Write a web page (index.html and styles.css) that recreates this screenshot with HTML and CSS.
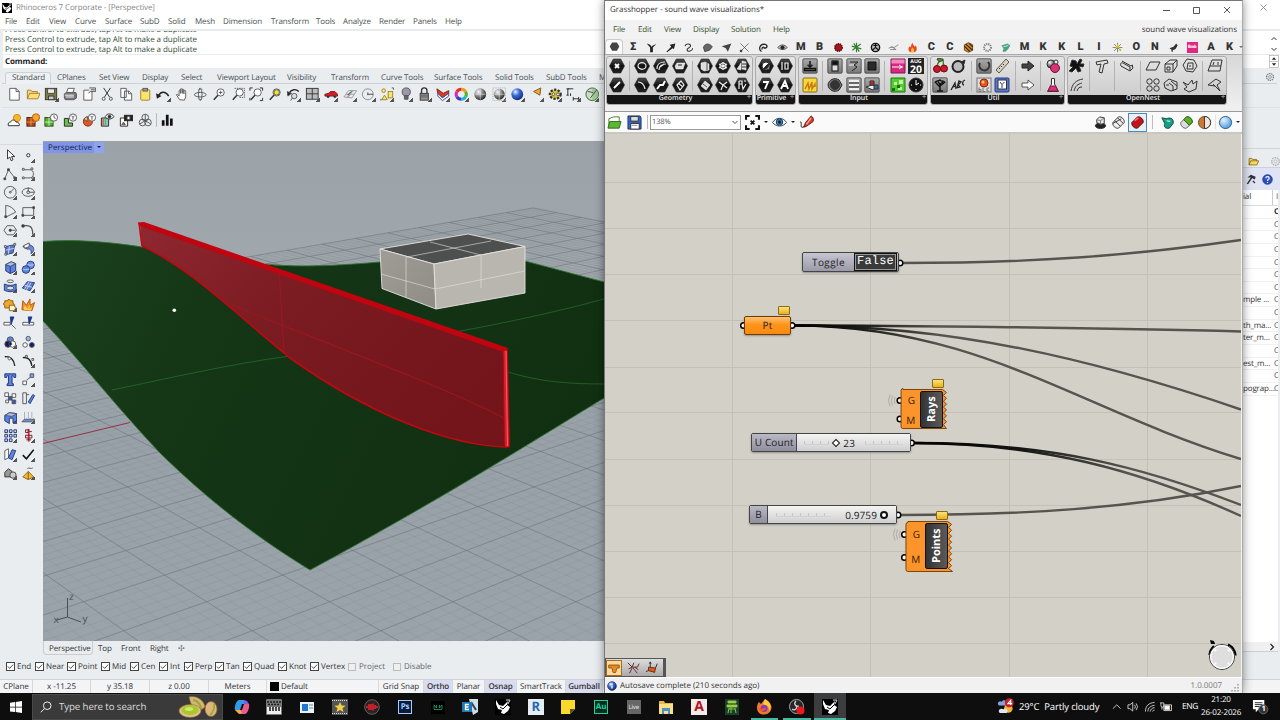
FILE: index.html
```html
<!DOCTYPE html>
<html lang="en">
<head>
    <meta charset="UTF-8">
    <meta name="viewport" content="width=device-width, initial-scale=1.0">
    <title>Rhinoceros 7 Corporate - [Perspective]</title>
    <link rel="stylesheet" href="styles.css">
</head>
<body>
    <!-- shared shapes -->
    <svg class="defs">
        <defs>
            <radialGradient id="gBall" cx=".35" cy=".3" r=".8"><stop offset="0" stop-color="#fff"/><stop offset=".45" stop-color="#888"/><stop offset="1" stop-color="#111"/></radialGradient>
            <radialGradient id="gBlue" cx=".35" cy=".3" r=".8"><stop offset="0" stop-color="#e8f4ff"/><stop offset=".4" stop-color="#3c6fd8"/><stop offset="1" stop-color="#0a1f6e"/></radialGradient>
            <radialGradient id="gSky" cx=".35" cy=".3" r=".8"><stop offset="0" stop-color="#e4f4ff"/><stop offset="1" stop-color="#4390d8"/></radialGradient>
            <linearGradient id="gHex" x1="0" y1="0" x2="0" y2="1"><stop offset="0" stop-color="#4a4a4a"/><stop offset=".5" stop-color="#111"/><stop offset="1" stop-color="#222"/></linearGradient>
            <linearGradient id="gBtn" x1="0" y1="0" x2="0" y2="1"><stop offset="0" stop-color="#aaa"/><stop offset="1" stop-color="#777"/></linearGradient>
            <linearGradient id="gLand" x1="0" y1="0" x2="1" y2=".3"><stop offset="0" stop-color="#1c421e"/><stop offset=".3" stop-color="#153716"/><stop offset="1" stop-color="#113012"/></linearGradient>
            <linearGradient id="gWall" x1="0" y1="0" x2="1" y2=".6"><stop offset="0" stop-color="#902830"/><stop offset=".45" stop-color="#7b1b22"/><stop offset="1" stop-color="#73151b"/></linearGradient>
            <linearGradient id="gSide" x1="0" y1="0" x2="1" y2="1"><stop offset="0" stop-color="#a09d97"/><stop offset="1" stop-color="#8f8c86"/></linearGradient>
            <linearGradient id="gPt" gradientUnits="userSpaceOnUse" x1="794" y1="0" x2="940" y2="0"><stop offset="0" stop-color="#000"/><stop offset=".4" stop-color="#161513"/><stop offset="1" stop-color="#57544e"/></linearGradient>
            <linearGradient id="gCount" gradientUnits="userSpaceOnUse" x1="914" y1="0" x2="1130" y2="0"><stop offset="0" stop-color="#000"/><stop offset=".5" stop-color="#161513"/><stop offset="1" stop-color="#57544e"/></linearGradient>
            <symbol id="hex" viewBox="0 0 16 16"><path d="M4.3 1h7.4L15.5 8l-3.8 7H4.3L.5 8z" fill="url(#gHex)" stroke="#222" stroke-width=".6"/></symbol>
            <symbol id="sq" viewBox="0 0 16 16"><rect x=".8" y=".8" width="14.4" height="14.4" rx="1" fill="url(#gBtn)" stroke="#444" stroke-width=".8"/></symbol>
            <symbol id="lens" viewBox="0 0 16 16"><circle cx="9.5" cy="6" r="4" fill="#fff" stroke="#555"/><path d="M6.5 9L2 14" stroke="#333" stroke-width="1.6" fill="none"/></symbol>
            <symbol id="rhino" viewBox="0 0 16 16"><rect width="16" height="16" fill="#000"/><path d="M1 1l3 5 4 1 5-5-1 4 3 2-2 4-4 3-3-1 1-3-4-1-2-5z" fill="#fff"/><path d="M5 8l3 2 4-4" stroke="#000" stroke-width="1" fill="none"/><path d="M11 1h4l-2 4" stroke="#ddd" stroke-width="1" fill="none"/></symbol>
            <symbol id="tick" viewBox="0 0 8 8"><path d="M1 4l2 2.200L7 1.800" fill="none" stroke="#222" stroke-width=".9"/></symbol>
            <symbol id="gear" viewBox="0 0 16 16"><circle cx="8" cy="8" r="5.5" fill="none" stroke="#777" stroke-width="2" stroke-dasharray="2.2 1.2"/><circle cx="8" cy="8" r="2.3" fill="none" stroke="#777"/></symbol>
        </defs>
    </svg>

    <div class="desktop">
        <div class="rhino">
            <div class="title-bar">
                <svg viewBox="0 0 16 16"><use href="#rhino"/></svg>
                <span>Rhinoceros 7 Corporate - [Perspective]</span>
                <svg class="close" viewBox="0 0 8 8"><path d="M.5.5l7 7m0-7l-7 7"/></svg>
            </div>
            <div class="menu">
                <span>File</span><span>Edit</span><span>View</span><span>Curve</span><span>Surface</span><span>SubD</span><span>Solid</span><span>Mesh</span><span>Dimension</span><span>Transform</span><span>Tools</span><span>Analyze</span><span>Render</span><span>Panels</span><span>Help</span>
            </div>
            <div class="history">
                <div class="lines">
                    <p>Press Control to extrude, tap Alt to make a duplicate</p>
                    <p>Press Control to extrude, tap Alt to make a duplicate</p>
                    <p>Press Control to extrude, tap Alt to make a duplicate</p>
                </div>
                <svg class="scroll" viewBox="0 0 10 24"><path d="M2.500 9L5 6.500 7.500 9M2.500 17L5 19.500 7.500 17"/></svg>
            </div>
            <div class="command"><b>Command:</b><svg class="scroll" viewBox="0 0 10 12"><rect x="1" y=".5" width="8" height="11"/><path d="M1 6h8"/><path d="M5 2l2 2.400H3zM5 10L3 7.600h4z" class="solid"/></svg></div>

            <div class="tabs">
                <span class="on">Standard</span><span>CPlanes</span><span>Set View</span><span>Display</span><span>Select</span><span>Viewport Layout</span><span>Visibility</span><span>Transform</span><span>Curve Tools</span><span>Surface Tools</span><span>Solid Tools</span><span>SubD Tools</span><span>Mesh</span>
                <svg class="tab-gear" viewBox="0 0 16 16"><use href="#gear"/></svg>
            </div>

            <div class="toolbar row1">
                <svg viewBox="0 0 16 16"><path d="M3 1.500h7l3.500 3.500v9.500H3z" fill="#fff"/><path d="M10 1.500V5h3.500"/></svg>
                <svg viewBox="0 0 16 16"><path d="M1.500 13V3.500h4l1 1.500h6v2" fill="#f8d878" stroke="#a87a20"/><path d="M1.500 13L4 7h11.500L13 13z" fill="#fce07a" stroke="#a87a20"/></svg>
                <svg class="fly" viewBox="0 0 16 16"><rect x="1.500" y="1.500" width="12.500" height="12.500" fill="#7d8040" stroke="#333"/><rect x="4" y="2" width="7.500" height="5" fill="#eee" stroke="#444"/><rect x="5" y="10" width="6" height="4" fill="#ccc" stroke="#333"/></svg>
                <svg viewBox="0 0 16 16"><path d="M4 6l1.500-4.500h7L11 6" fill="#fff"/><path d="M1.500 7.500L4 6h10l1 2v4l-3 2H2.500l-1-2z" fill="#777"/><path d="M2 9h10m0 2H3" stroke="#fff"/></svg>
                <svg viewBox="0 0 16 16"><path d="M2 3.500h9v11H2z" fill="#fff"/><path d="M8 1h7v4H9L7 7" fill="#ddd"/><path d="M10 3h4"/></svg>
                <svg viewBox="0 0 16 16"><path d="M4 1l6.500 10M11.500 1L5 11" stroke="#222"/><circle cx="4" cy="13" r="1.700"/><circle cx="12" cy="13" r="1.700"/></svg>
                <svg viewBox="0 0 16 16"><path d="M2 1.500h6v10H2zM6 4.500h5l3 3v7H6z" fill="#fff"/><path d="M10.500 4.500v3H14"/></svg>
                <svg viewBox="0 0 16 16"><rect x="3" y="3" width="10" height="11.500" rx="1" fill="#fbe46d" stroke="#a07c28"/><rect x="5.500" y="1.500" width="5" height="3" fill="#999" stroke="#555"/></svg>
                <svg class="fly" viewBox="0 0 16 16"><path d="M3 9c3-5 8-4 11 1" stroke="#222" stroke-width="1.600"/><path d="M0 7l1 6 5-3z" fill="#222" stroke="none"/></svg>
                <svg viewBox="0 0 16 16"><path d="M5 14L1.500 8.500c1-1 2 0 3 1.500V4c1-1 1.500 0 1.700 3V2c1-1 1.800 0 1.800 5V2.500c1-1 1.800 0 1.800 5V4c1.500-1 2 0 2 2v5l-1.500 3.500z" fill="#fff"/></svg>
                <svg viewBox="0 0 16 16"><ellipse cx="8" cy="8.500" rx="6.500" ry="2.500"/><ellipse cx="8" cy="8" rx="2" ry="6"/><path d="M6 3l2-2 2 2M6 13l2 2 2-2"/></svg>
                <svg viewBox="0 0 16 16"><use href="#lens"/><path d="M7.500 6h4M9.500 4v4"/></svg>
                <svg viewBox="0 0 16 16"><use href="#lens"/><path d="M4 1.500h11v10H9" stroke-dasharray="1.500 1"/></svg>
                <svg viewBox="0 0 16 16"><use href="#lens"/><path d="M1 4V1h3m8 0h3v3m0 8v3h-3M1 12v3" stroke="#222"/></svg>
                <svg viewBox="0 0 16 16"><use href="#lens"/><circle cx="9.500" cy="6" r="3" fill="#f5e428"/></svg>
                <svg class="fly" viewBox="0 0 16 16"><path d="M2 7c3-5 8-5 11-2" stroke="#222" stroke-width="1.500"/><path d="M0 5l1 5 4-3z" fill="#222"/><circle cx="8" cy="10" r="3" fill="#ddd"/><path d="M6 12l-2 3"/></svg>
                <svg class="fly" viewBox="0 0 16 16"><rect x="1.500" y="1.500" width="13" height="12" fill="#b9bcbe" stroke="#333"/><path d="M8 1.500v12M1.500 7.500h13" stroke="#333"/></svg>
                <svg class="fly" viewBox="0 0 16 16"><path d="M1 10V8l4-1 2-2h5l3 3v2z" fill="#d81c24" stroke="#8e1218"/><circle cx="4.500" cy="10.500" r="1.300" fill="#222"/><circle cx="12" cy="10.500" r="1.300" fill="#222"/></svg>
                <svg class="fly" viewBox="0 0 16 16"><path d="M1 11l5-7h9l-5 8zM3.500 8h9M6 11l5-7M4 12l6-8" stroke="#999"/><path d="M5 9l4-4" stroke="#333"/></svg>
                <svg class="fly" viewBox="0 0 16 16"><circle cx="7.500" cy="8" r="6" stroke="#888"/><path d="M7.500 8h6M7.500 6v3" stroke="#444"/></svg>
                <svg class="fly" viewBox="0 0 16 16"><rect x="9" y="5" width="5" height="7" fill="#fbe46d" stroke="#9c8420"/><path d="M5 9l3 5H2z" fill="#fbe46d" stroke="#9c8420"/><circle cx="4" cy="4" r="2" fill="#fbe46d" stroke="#9c8420"/><path d="M13 1h2v2M1 13v2"/></svg>
                <svg class="fly" viewBox="0 0 16 16"><circle cx="8" cy="5.500" r="4.500" fill="#99a" stroke="#555"/><path d="M6 9.500h4v4H6z" fill="#666"/></svg>
                <svg class="fly" viewBox="0 0 16 16"><path d="M5 7V4c0-4 6-4 6 0v3" stroke="#333" stroke-width="1.500"/><rect x="3.500" y="7" width="9" height="7.500" fill="#999" stroke="#333"/><path d="M4 9h8m-8 2h8" stroke="#555"/></svg>
                <svg class="fly" viewBox="0 0 16 16"><path d="M1 2l7 5 6-3v3l-7 5-5-5z" fill="#e33a24" stroke="#7a1a12"/><path d="M2 7l5 5 7-5v3l-7 5-5-5z" fill="#fff" stroke="#2844a0"/></svg>
                <svg class="fly" viewBox="0 0 16 16" stroke-width="3.400"><path d="M8 2.500a5.500 5.500 0 014.800 2.700" stroke="#f29b1c"/><path d="M12.800 5.200a5.500 5.500 0 010 5.600" stroke="#52b531"/><path d="M12.800 10.800A5.500 5.500 0 018 13.500" stroke="#25b6cf"/><path d="M8 13.500a5.500 5.500 0 01-4.800-2.700" stroke="#333bd0"/><path d="M3.200 10.800a5.500 5.500 0 010-5.600" stroke="#d528c0"/><path d="M3.200 5.200A5.500 5.500 0 018 2.500" stroke="#e3302a"/></svg>
                <svg viewBox="0 0 16 16"><circle cx="8" cy="8" r="6.500" fill="url(#gBall)" stroke="none"/><path d="M8 2v12M2 8h12" stroke="#eee" stroke-width=".6"/></svg>
                <svg class="fly" viewBox="0 0 16 16"><rect x="1" y="1" width="14" height="14" stroke-dasharray="1 1" stroke="#aaa"/><circle cx="8" cy="8" r="6" fill="url(#gBall)" stroke="none"/><path d="M8 2v12M2 8h12" stroke="#eee" stroke-width=".6"/></svg>
                <svg class="fly" viewBox="0 0 16 16"><circle cx="8" cy="8" r="6.500" fill="url(#gBlue)" stroke="none"/></svg>
                <svg class="fly" viewBox="0 0 16 16"><path d="M5 5l8-4-1 8z" fill="#f4a83a" stroke="#7a5216"/><path d="M1 4h3M1 7h3" stroke="#ddd"/></svg>
                <svg class="fly" viewBox="0 0 16 16"><ellipse cx="8" cy="8" rx="6" ry="5" fill="#d9c23c" stroke="#333" stroke-dasharray="2.500 1.500" stroke-width="2.500"/><circle cx="6" cy="8" r="1.500" fill="#fff"/><circle cx="11" cy="8" r="1.500" fill="#fff"/></svg>
                <svg class="fly" viewBox="0 0 16 16"><path d="M2 9V2h6M.500 2H3M8 13h6M8 11v4M14 11v4M5 7v3M.500 9H3" stroke="#222"/></svg>
                <svg class="fly" viewBox="0 0 16 16"><circle cx="8" cy="8" r="7" fill="#9bc98f" stroke="#4d6048"/><path d="M8 2a6 6 0 000 12z" fill="#c9dfc4" stroke="none"/><path d="M13 3L6 12M3 5l6 1" stroke="#444"/></svg>
            </div>

            <div class="toolbar row2">
                <svg viewBox="0 0 16 16"><circle cx="11" cy="5.500" r="4" fill="#f5b62c" stroke="#d48a10"/><path d="M1.500 14c-1-3 1-4 2.500-4 1-3 5-3 6 0 3 0 4 2 3.500 4z" fill="#fff" stroke="#222"/></svg>
                <svg viewBox="0 0 16 16"><rect x="1" y="5" width="9" height="9.500" fill="#b5421f" stroke="#4a1a0c"/><path d="M5.500 5v9M1 10h9" stroke="#e2a13b"/><circle cx="11" cy="5" r="4" fill="#f5a62c" stroke="#b55c10" stroke-dasharray="1.500 .7" stroke-width="1.500"/></svg>
                <svg viewBox="0 0 16 16"><rect x="1" y="5" width="9" height="9.500" fill="#51b52a" stroke="#234a14"/><path d="M5.500 5v9M1 10h9" stroke="#d7eecb"/><circle cx="11" cy="5" r="4" fill="#fff"/><path d="M11 2.500V5l2 1"/></svg>
                <svg viewBox="0 0 16 16"><path d="M1.500 6v8.500h9V11H6V6z" fill="#6ec14d" stroke="#222"/><circle cx="11" cy="5" r="4" fill="#fff"/><path d="M9.500 3L11 5l1.500-2M11 5v2.500"/></svg>
                <svg viewBox="0 0 16 16"><circle cx="6.500" cy="9.500" r="5" fill="#e8542a" stroke="#7a2a10"/><path d="M6.500 9.500L2 7a5 5 0 014-3z" fill="#f8c23c"/><circle cx="11" cy="5" r="4" fill="#fff"/><path d="M9.500 3L11 5l1.500-2M11 5v2.500"/></svg>
                <svg viewBox="0 0 16 16"><path d="M1.500 5.500h8v9h-8z" fill="#8ac6d8" stroke="#222"/><path d="M3.500 6v8" stroke="#e25a3c" stroke-width="1.500"/><path d="M6 6v8" stroke="#67b54a" stroke-width="1.500"/><path d="M5.500 4c3-4 7-4 10 0-3 3.500-7 3.500-10 0z" fill="#fff" stroke="#222"/><circle cx="10.500" cy="4" r="1.700" fill="#222"/></svg>
                <svg viewBox="0 0 16 16"><path d="M1.500 5.500h8v9h-8z" fill="#fff" stroke="#222"/><path d="M3 13l2-3 2 3z" fill="#e8542a"/><rect x="6" y="2.500" width="9" height="6" fill="#222" stroke="#222"/><circle cx="10.500" cy="5.500" r="1.800" fill="#fff"/></svg>
                <svg viewBox="0 0 16 16"><circle cx="8" cy="5" r="3.700"/><circle cx="5" cy="10.500" r="3.700"/><circle cx="11" cy="10.500" r="3.700"/><path d="M8 1.500v7l-6 3.500M8 8.500l6 3.500"/></svg>
                <i class="split"></i>
                <svg viewBox="0 0 16 16"><path d="M2 8h3v6H2zM6.500 2h3v12h-3zM11 6h3v8h-3z" fill="#111" stroke="none"/></svg>
            </div>

            <div class="main">
                <div class="side">
                    <svg viewBox="0 0 16 16"><path d="M5 2v10l2.500-2L9 14l2-1-1.500-3.500H13z" fill="#fff" stroke="#222"/></svg>
                    <svg class="fly" viewBox="0 0 16 16"><circle cx="8" cy="8" r="1.800" fill="#fff" stroke="#222"/></svg>
                    <svg class="fly" viewBox="0 0 16 16"><path d="M2 13L6 3l7 9"/><path d="M1 12h2v2H1zM12 11h2v2h-2zM5 2h2v2H5z" fill="#222"/></svg>
                    <svg class="fly" viewBox="0 0 16 16"><path d="M3 3h7c5 0 5 9 0 9H3"/><path d="M1.500 1.500h2v2h-2zM11 1h2v2h-2zM1.500 11h2v2h-2zM12 11h2v2h-2z" fill="#fff"/></svg>
                    <svg class="fly" viewBox="0 0 16 16"><circle cx="8" cy="8" r="6.500"/><path d="M8 8l4.500-4.500"/><circle cx="8" cy="8" r="1"/></svg>
                    <svg class="fly" viewBox="0 0 16 16"><ellipse cx="8" cy="8" rx="6.800" ry="4.500"/><circle cx="8" cy="8" r="1.600"/><path d="M8 8V2.500M9.500 8h5"/></svg>
                    <svg class="fly" viewBox="0 0 16 16"><path d="M3 1.500v13L14 9C12 5 8 2 3 1.500z"/><path d="M2 13h2v2H2z" fill="#222"/></svg>
                    <svg class="fly" viewBox="0 0 16 16"><path d="M2 4h12v8.500H2z"/><path d="M1 11.500h2v2H1zM13 3h2v2h-2z" fill="#222"/></svg>
                    <svg class="fly" viewBox="0 0 16 16"><path d="M4.500 3h7L15 8l-3.500 5h-7L1 8z"/><circle cx="8" cy="8" r="1.300" fill="#222"/><path d="M8 8h6"/></svg>
                    <svg class="fly" viewBox="0 0 16 16"><path d="M2 3h4c6 0 7 4 7 10" stroke-width="1.400"/><path d="M1 2h2.500v2.500H1z" fill="#222"/></svg>
                    <svg class="fly" viewBox="0 0 16 16"><path d="M3 5l10-2-2 9-8 2z" fill="#5b77c8" stroke="#223a80"/><path d="M7 4.500L6 13M3 9l9-2" stroke="#cdd8f8"/><path d="M1.500 4h2v2h-2zM12 1.500h2v2h-2zM2 12.500h2v2H2z" fill="#fff"/></svg>
                    <svg class="fly" viewBox="0 0 16 16"><path d="M2 5l6-3 5 3c2 3 1 6-2 8 1-4-1-6-4-5z" fill="#6e8de0" stroke="#2b3f80"/><path d="M3 4l6-3v4L4 7z" fill="#fff"/></svg>
                    <svg class="fly" viewBox="0 0 16 16"><path d="M3 5l6-3 5 2v8l-6 3-5-3z" fill="#5e83dc" stroke="#20367c"/><path d="M3 5l5 2 6-3M8 7v8" stroke="#20367c"/><path d="M3 5l6-3 5 2-6 3z" fill="#a9c0f6"/></svg>
                    <svg class="fly" viewBox="0 0 16 16"><circle cx="10.500" cy="5.500" r="4.200" fill="#6f90e2" stroke="#20367c"/><circle cx="5.500" cy="10.500" r="4.200" fill="#5e83dc" stroke="#20367c"/><path d="M2 10c2 1 5 1 7 0M7 5c2 1 5 1 7 0" stroke="#c7d6ff"/></svg>
                    <svg class="fly" viewBox="0 0 16 16"><ellipse cx="8" cy="2.500" rx="3.500" ry="1.500"/><path d="M1.500 5.500c4 2 9 2 13 0v7c-4 2-9 2-13 0z" fill="#5e83dc" stroke="#20367c"/><ellipse cx="8" cy="10" rx="4" ry="2" fill="#d8e2fc"/></svg>
                    <svg class="fly" viewBox="0 0 16 16"><path d="M1.500 10L7 3l8 1-5 9z" fill="#5b77c8" stroke="#223a80"/><path d="M4 7l8 2M6 12l5-8M9 3l-5 8" stroke="#cdd8f8"/></svg>
                    <svg class="fly" viewBox="0 0 16 16"><path d="M2 3h3c0-2 3-2 3 0h3v3c2 0 2 3 0 3v2H2V8C0 8 0 5 2 5z" fill="#f0a82c" stroke="#8a5c10"/><path d="M7 8h6v2c2 0 2 2 0 2v2H7z" fill="#fff3cd" stroke="#8a5c10"/></svg>
                    <svg viewBox="0 0 16 16"><path d="M1 13L2 3l4 5 4-7v7l5-3-3 9z" fill="#ef9426" stroke="#b5520c"/><path d="M3 13l1-5 3 4 3-5-1 5 3-2-1 4z" fill="#fbd05a" stroke="none"/></svg>
                    <svg viewBox="0 0 16 16"><path d="M1 7h7v3H1zM9 9l5 5" fill="#fff"/><path d="M8 1h4L9 9z" fill="#1f3690" stroke="#1f3690"/></svg>
                    <svg viewBox="0 0 16 16"><path d="M2 7h12v3H2z" fill="#fff"/><path d="M8 1h4L9 9z" fill="#1f3690" stroke="#1f3690"/></svg>
                    <svg class="fly" viewBox="0 0 16 16"><circle cx="8" cy="5.500" r="3.500" fill="#5e83dc"/><circle cx="5.500" cy="10" r="3.500" fill="#111b52"/><circle cx="10.500" cy="10" r="3.500" fill="#fff"/><path d="M8 7l2 3-2 2-2-2z" fill="#111b52"/></svg>
                    <svg viewBox="0 0 16 16"><circle cx="8" cy="4" r="2.500" fill="#9fb4ee"/><circle cx="4.500" cy="11" r="2.500" fill="#fff"/><circle cx="12" cy="11" r="2.700" fill="#111b82"/></svg>
                    <svg viewBox="0 0 16 16"><path d="M2 3c6-1 10 3 11 10" stroke="#222" stroke-width="1.500"/><circle cx="7" cy="5" r="1.500" fill="#fff"/></svg>
                    <svg class="fly" viewBox="0 0 16 16"><path d="M2 4c6-1 9 3 10 9" stroke="#222" stroke-width="1.500"/><path d="M5 1.500h2v2H5zM12 5h2v2h-2z" fill="#fff"/></svg>
                    <svg viewBox="0 0 16 16"><path d="M2 2h12v4h-2c0-2-1-2-2-2v9h1.500v2h-7v-2H6V4C5 4 4 4 4 6H2z" fill="#5e83dc" stroke="#1b2f78"/></svg>
                    <svg class="fly" viewBox="0 0 16 16"><path d="M2 10h4v4H2z" fill="#fff"/><path d="M10 2h4v4h-4z" fill="#7f9cec"/><path d="M6 9l4-3"/></svg>
                    <svg viewBox="0 0 16 16"><path d="M2 2h4v4H2zM10 3h4v4h-4zM3 10h3v3H3z" fill="#fff"/><path d="M6 6h4v4H6zM10 10h4v4h-4z" fill="#3a59b8"/></svg>
                    <svg viewBox="0 0 16 16"><path d="M2 2h4v12H2zM6 4h3"/><path d="M8 12l5-8 2 1-5 9z" fill="#5e83dc" stroke="#20367c"/></svg>
                    <svg class="fly" viewBox="0 0 16 16"><path d="M2 6l5-3 8 1v8l-4 2V9H7v6l-5-3z" fill="#5e83dc" stroke="#20367c"/><path d="M2 6l5-3 8 1-5 3z" fill="#a9c0f6"/></svg>
                    <svg class="fly" viewBox="0 0 16 16"><path d="M1 13l3-3h11l-3 3z" fill="#6f90e2"/><path d="M4 2v8M8 2v8M12 2v8" stroke="#fff" stroke-width="2"/><path d="M4 2v8M8 2v8M12 2v8" stroke="#99a"/></svg>
                    <svg class="fly" viewBox="0 0 16 16"><path d="M2 2h3v3H2zM7 2h3v3H7zM12 2h3v3h-3zM2 7h3v3H2zM7 7h3v3H7zM12 7h3v3h-3zM2 12h3v3H2zM7 12h3v3H7z" fill="#ccd6f6" stroke="#23326c"/></svg>
                    <svg class="fly" viewBox="0 0 16 16"><path d="M8.500 1v14" stroke="#d82c3a" stroke-width="2"/><path d="M5 2h3v3H5zM5 8h7v3H5zM9 4h3M6 13h5" stroke="#6a1720"/></svg>
                    <svg class="fly" viewBox="0 0 16 16"><path d="M2 4l4-2v10l-4 2z" fill="#fff"/><path d="M6 12l4-9 4 1-4 10z" fill="#5e83dc" stroke="#20367c"/></svg>
                    <svg class="fly" viewBox="0 0 16 16"><path d="M2 9l4 4 8-10" stroke="#111" stroke-width="1.700"/></svg>
                    <svg class="fly" viewBox="0 0 16 16"><path d="M2 7l4-4 4 3v6H2z" fill="#999" stroke="#333"/><circle cx="11" cy="10" r="3.500" fill="#ccc" stroke="#444"/></svg>
                    <svg class="fly" viewBox="0 0 16 16"><path d="M8 6l6 6-6 3-6-3z" fill="#f0b83a" stroke="#8a5c10"/><path d="M8 6v9" stroke="#8a5c10"/><path d="M7 3c2-2 4 1 6-1"/></svg>
                </div>

                <div class="view">
                    <div class="view-port">
                        <svg class="scene" viewBox="43 141 561 500">
                            <path id="minor" class="minor"/>
                            <path id="major" class="major"/>
                            <path d="M43 443.500L130 422.500" stroke="#98314a"/>
                            <!-- terrain -->
                            <path class="land" d="M43 241.500C75 239 110 242 142 247L262 264C300 268 345 265 380 262L525 261L604 282V398C540 437 440 500 310 570C240 527 195 487 160 453C120 411 85 366 43 321z"/>
                            <path d="M43 241.500C75 239 110 242 142 247M266 264C300 268 345 265 380 262M525 261L604 282M604 398C540 437 440 500 310 570C240 527 195 487 160 453C120 411 85 366 43 321" class="rim"/>
                            <path d="M112 390C170 378 230 364 290 356M450 333C510 322 560 311 604 299M508 372C540 382 570 384 604 384" class="iso"/>
                            <!-- solid box -->
                            <g class="block">
                                <path d="M380 249L468 234 525 246.500 434 264z" fill="#4e504f"/>
                                <path d="M380 249L434 264 436 309 382 288.500z" fill="url(#gSide)"/>
                                <path d="M434 264L525 246.500V293L436 309z" fill="#b9b6b0"/>
                                <path d="M406 257v40M381 274l54 15 90-18M430 242l51 13M407 257l84-16M481 256v32" class="thin"/>
                            </g>
                            <!-- wall -->
                            <path d="M140 223L506 351 508 446C450 446 370 415 290 358C235 313 190 268 142 246z" fill="url(#gWall)"/>
                            <path d="M279 272L284 352M232 305C330 345 440 385 504 418" stroke="#a01620" fill="none"/>
                            <path d="M142 246C190 268 235 313 290 358C370 415 450 446 508 447" class="edge"/>
                            <path d="M137.500 222.500L144 222 508 348 507 352.500 500 351 140 226z" fill="#c00510"/>
                            <path d="M139 223L142 246" class="edge"/>
                            <path d="M503 350h4.500l2 97h-5z" fill="#d2202c" stroke="#b00610"/>
                            <path d="M506 351l1.500 95" stroke="#ff5a62"/>
                            <circle cx="174.300" cy="310.300" r="1.800" fill="#fff"/>
                            <path d="M67.500 617V598M67.500 617L57 620M67.500 617L81 622" stroke="#4a5054" fill="none"/>
                            <text x="69" y="600">z</text><text x="53.500" y="623">x</text><text x="82.500" y="622">y</text>
                        </svg>
                        <div class="view-label">Perspective<i></i></div>
                    </div>
                    <div class="view-tabs"><span class="on">Perspective</span><span>Top</span><span>Front</span><span>Right</span><span class="plus">✣</span></div>
                </div>

                <div class="panel">
                    <div class="panel-tabs">
                        <svg viewBox="0 0 16 16"><path d="M1.500 13V3.500h4l1 1.500h6v2M1.500 13L4 7h11.500L13 13z" fill="#fbd95a" stroke="#6c5212"/></svg>
                        <svg viewBox="0 0 16 16" class="pale"><use href="#gear"/></svg>
                    </div>
                    <div class="panel-tools">
                        <svg viewBox="0 0 16 16"><path d="M2 5l5-4 7 3-1 4-4-2-6 9-2-1 6-9z" fill="#333" stroke="none"/><path d="M10 10l3 3" stroke="#333" stroke-width="2"/></svg>
                        <svg viewBox="0 0 16 16"><circle cx="8" cy="8" r="7" fill="#2b50c4" stroke="#1a3280"/><path d="M5.500 6c0-3 5-3 5 0 0 1.800-2.500 1.500-2.500 4M8 11.500v1.500" stroke="#fff" stroke-width="1.600"/></svg>
                    </div>
                    <div class="list">
                        <div class="head"><span>ial</span><em>I</em></div>
                        <div><span></span><b>C</b></div>
                        <div><span></span><em>C</em></div>
                        <div><span></span><em>C</em></div>
                        <div><span></span><em>C</em></div>
                        <div><span></span><em>C</em></div>
                        <div><span></span><em>C</em></div>
                        <div><span></span><em>C</em></div>
                        <div><span>mple ...</span><em>C</em></div>
                        <div><span></span><em>C</em></div>
                        <div><span>th_ma...</span><em>C</em></div>
                        <div><span>ter_m...</span><em>C</em></div>
                        <div><span></span><em>C</em></div>
                        <div><span>est_m...</span><em>C</em></div>
                        <div><span></span><em>C</em></div>
                        <div><span>pograp...</span><em>C</em></div>
                    </div>
                    <div class="hscroll"><svg viewBox="0 0 8 8"><path d="M2.500 1l3 3-3 3" stroke="#222" fill="none" stroke-width="1.200"/></svg></div>
                </div>
            </div>

            <div class="osnap">
                <label><svg><use href="#tick"/></svg>End</label>
                <label><svg><use href="#tick"/></svg>Near</label>
                <label><svg><use href="#tick"/></svg>Point</label>
                <label><svg><use href="#tick"/></svg>Mid</label>
                <label><svg><use href="#tick"/></svg>Cen</label>
                <label><svg><use href="#tick"/></svg>Int</label>
                <label><svg><use href="#tick"/></svg>Perp</label>
                <label><svg><use href="#tick"/></svg>Tan</label>
                <label><svg><use href="#tick"/></svg>Quad</label>
                <label><svg><use href="#tick"/></svg>Knot</label>
                <label><svg><use href="#tick"/></svg>Vertex</label>
                <label class="off"><svg></svg>Project</label>
                <label class="off"><svg></svg>Disable</label>
            </div>
            <div class="status">
                <span>CPlane</span><span>x -11.25</span><span>y 35.18</span><span>z 0.00</span><span>Meters</span><span class="layer"><i></i>Default</span><span>Grid Snap</span><span class="act">Ortho</span><span>Planar</span><span class="act">Osnap</span><span>SmartTrack</span><span class="act">Gumball</span>
            </div>
        </div>

        <!-- grasshopper window -->
        <div class="gh">
            <div class="gh-title">
                <span>Grasshopper - sound wave visualizations*</span>
                <svg viewBox="0 0 70 10"><path d="M1 5.500h7M31.500 2.500h6v6h-6zM62 2l6 6m0-6l-6 6"/></svg>
            </div>
            <div class="gh-menu"><span>File</span><span>Edit</span><span>View</span><span>Display</span><span>Solution</span><span>Help</span><span class="doc">sound wave visualizations</span></div>
            <div class="gh-tabs">
                <span class="on"><svg viewBox="0 0 16 16"><path d="M4.500 2h7L15 8l-3.500 6h-7L1 8z" fill="#444" stroke="none"/></svg></span>
                <span>Σ</span>
                <span><svg viewBox="0 0 16 16"><path d="M1 2l5 6v7h4V8l5-5-5 2-2 2-2-3z" fill="#222" stroke="none"/></svg></span>
                <span><svg viewBox="0 0 16 16"><path d="M2 14L9 7 7 4l8-2-2 8-2-1-8 6z" fill="#222" stroke="none"/></svg></span>
                <span><svg viewBox="0 0 16 16"><path d="M3 6c1-5 9-3 8 0s-6 3-5 6 8 1 8-3" stroke-width="1.600"/></svg></span>
                <span><svg viewBox="0 0 16 16"><path d="M2 8C3 3 10 0 15 7l-4 5-7 2z" fill="#666" stroke="#333"/></svg></span>
                <span><svg viewBox="0 0 16 16"><path d="M1 6l14-4-5 12-3-5z" fill="#444" stroke="none"/></svg></span>
                <span><svg viewBox="0 0 16 16"><path d="M2 2l12 12M14 2L2 14" stroke="#444"/><circle cx="3" cy="13" r="1.500" fill="#444"/></svg></span>
                <span><svg viewBox="0 0 16 16"><path d="M5 14c-5-4-2-11 4-11 6 1 5 6 0 6 0-3-4-1-3 2" stroke="#222" stroke-width="1.800"/></svg></span>
                <span><svg viewBox="0 0 16 16"><path d="M1 8c4-5 10-5 14 0-4 4-10 4-14 0z" fill="#bbb" stroke="#333"/><circle cx="8" cy="8" r="2.500" fill="#222"/></svg></span>
                <span>M</span>
                <span>B</span>
                <span><svg viewBox="0 0 16 16"><circle cx="8" cy="8" r="5.500" fill="#a3141d" stroke="#5b0a10" stroke-width="2" stroke-dasharray="2 1"/></svg></span>
                <span><svg viewBox="0 0 16 16"><path d="M8 1v14M1 6l14 4M2 12L14 3M4 2l8 12" stroke="#2f7d2e" stroke-width="1.700"/></svg></span>
                <span><svg viewBox="0 0 16 16"><circle cx="8" cy="8" r="6" fill="#bbb" stroke="#111" stroke-width="2"/><path d="M8 2v6l-5 4M8 8l5 4M5 5h6" stroke="#111" stroke-width="1.600"/></svg></span>
                <span><svg viewBox="0 0 16 16"><path d="M1 9l5-2 3 1 6-4M3 11h9M4 7l7 3" stroke="#666"/></svg></span>
                <span><svg viewBox="0 0 16 16"><path d="M8 15C1 15 1 9 4 6l1 2c1-2 1-5 3-7 0 3 2 3 3 6l2-2c2 5 2 10-5 10z" fill="#e8481f" stroke="none"/><path d="M8 15c-3 0-3-4 0-7 2 2 4 7 0 7z" fill="#fbc23c" stroke="none"/></svg></span>
                <span>C</span>
                <span>C</span>
                <span><svg viewBox="0 0 16 16"><path d="M8 1l6 3v8l-6 3-6-3V4z" fill="#d58b2b" stroke="#3a2408"/><path d="M2 6l8 8M4 3l10 9M9 2l5 5" stroke="#3a2408" stroke-width="1.600"/></svg></span>
                <span><svg viewBox="0 0 16 16"><circle cx="8" cy="8" r="5" stroke="#777" stroke-width="3" stroke-dasharray="1.600 1.400"/></svg></span>
                <span><svg viewBox="0 0 16 16"><path d="M2 5l9-3 4 3-3 5-4 4H4l1-5z" fill="#49a389" stroke="none"/><path d="M5 7l7-2" stroke="#fff"/></svg></span>
                <span>M</span>
                <span>K</span>
                <span>K</span>
                <span>L</span>
                <span>I</span>
                <span><svg viewBox="0 0 16 16"><path d="M3 3l10 10M13 3L3 13M8 1v14M1 8h14" stroke="#555"/><path d="M8 3l3 5-6 1zM11 8l3 4-4 1z" fill="#d3cf25" stroke="none"/></svg></span>
                <span>O</span>
                <span>N</span>
                <span><svg viewBox="0 0 16 16"><path d="M2 9l6-2 4-5 2 3-3 5-4 2v2H5v-3z" fill="#333" stroke="none"/></svg></span>
                <span class="pink">Emb</span>
                <span>A</span>
                <span>K</span>
                <i class="more"></i>
            </div>

            <div class="ribbon">
                <div class="group g-geo">
                    <div class="cells">
                        <svg viewBox="0 0 16 16"><use href="#hex"/><path d="M6 6l4 4m0-4l-4 4" class="w2"/></svg>
                        <svg viewBox="0 0 16 16"><use href="#hex"/><path d="M5 11l6-6" class="w2"/></svg>
                        <i></i>
                        <svg viewBox="0 0 16 16"><use href="#hex"/><ellipse cx="8" cy="8" rx="4" ry="3.300" class="w"/></svg>
                        <svg viewBox="0 0 16 16"><use href="#hex"/><path d="M4 5c4 0 6 2 7 7" class="w"/></svg>
                        <svg viewBox="0 0 16 16"><use href="#hex"/><path d="M4 11c0-5 2-7 8-7M6 12c0-4 3-6 7-6M7 9l4-3" class="w"/></svg>
                        <svg viewBox="0 0 16 16"><use href="#hex"/><path d="M4 12l3-4 3 0 2-4" class="w2"/></svg>
                        <svg viewBox="0 0 16 16"><use href="#hex"/><path d="M3 8l2-3h8l-2 6H4z" class="f"/><path d="M6 7h4" stroke="#222"/></svg>
                        <svg viewBox="0 0 16 16"><use href="#hex"/><path d="M5 8l4-4 3 4-4 5zM6 6l5 4" class="w"/></svg>
                        <i></i>
                        <svg viewBox="0 0 16 16"><use href="#hex"/><path d="M4 5l4-1 4 2v6l-5 1-3-2z" class="f"/><path d="M10 5v7" stroke="#555"/></svg>
                        <svg viewBox="0 0 16 16"><use href="#hex"/><path d="M4 9l4-5 5 4-4 5z" class="f"/><path d="M6 7l4 3" stroke="#555"/></svg>
                        <svg viewBox="0 0 16 16"><use href="#hex"/><path d="M8 4v8M4 6l8 4M4 10l8-4" class="w"/><circle cx="8" cy="8" r="3" class="w"/></svg>
                        <svg viewBox="0 0 16 16"><use href="#hex"/><path d="M4 5l4 3 4-3M8 8l-2 5M8 8l4 3" class="w"/></svg>
                        <svg viewBox="0 0 16 16"><use href="#hex"/><path d="M8 3l4 1v8l-4-1zM7 5l-4 6 4 1z" class="f"/><path d="M8 6h4M8 9h4" stroke="#333"/></svg>
                        <svg viewBox="0 0 16 16"><use href="#hex"/><path d="M5 4v8M5 4h3v3H5M8 7l1 5 3-5" class="w"/><path d="M10 4h2" class="w"/></svg>
                    </div>
                    <h6>Geometry<b>+</b></h6>
                </div>
                <div class="group g-prim">
                    <div class="cells">
                        <svg viewBox="0 0 16 16"><use href="#hex"/><circle cx="8" cy="8" r="4" fill="#fff"/><path d="M5 11l6-6v2c0 3-3 5-6 4z" fill="#222"/></svg>
                        <svg viewBox="0 0 16 16"><use href="#hex"/><path d="M5 5h5l-3 7" class="w2"/></svg>
                        <svg viewBox="0 0 16 16"><use href="#hex"/><path d="M5 4v8M8 5v6h3V5z" class="w"/></svg>
                        <svg viewBox="0 0 16 16"><use href="#hex"/><path d="M4 12l4-8 3 8M6 9h4" class="w2"/></svg>
                    </div>
                    <h6>Primitive<b>+</b></h6>
                </div>
                <div class="group g-in">
                    <div class="cells">
                        <svg viewBox="0 0 16 16"><use href="#sq"/><path d="M8 3v6M2.500 12.500h11v-2h-11z" stroke="#111" stroke-width="1.500"/><path d="M5.500 7h5L8 10z" fill="#111"/></svg>
                        <svg viewBox="0 0 16 16"><rect x="1" y="1" width="14" height="14" rx="1" fill="#fcd63e" stroke="#846a12"/><path d="M3 12l3-6 1 6 3-7v7l3-5v3" stroke="#c47a12" stroke-width="1.400"/></svg>
                        <i></i>
                        <svg viewBox="0 0 16 16"><use href="#sq"/><rect x="5" y="3" width="6" height="10" fill="#ddd" stroke="#111"/><path d="M5 3h6v4H5z" fill="#111"/></svg>
                        <svg viewBox="0 0 16 16"><path d="M1 8a7 7 0 0111-5l3 5-3 5A7 7 0 011 8z" fill="#777" stroke="#222"/><circle cx="8" cy="8" r="4.500" fill="#333"/></svg>
                        <svg viewBox="0 0 16 16"><use href="#sq"/><path d="M4 4h8l-4 3 3 2-5 4" stroke="#222"/><path d="M3 7h5" stroke="#eee"/></svg>
                        <svg viewBox="0 0 16 16"><use href="#sq"/><path d="M3 4h10M3 8h10M3 12h10" stroke="#eee" stroke-width="2.400"/><path d="M3 6h10M3 10h10" stroke="#222"/></svg>
                        <svg viewBox="0 0 16 16"><use href="#sq"/><path d="M4 4h8v8H4z" fill="#2a2a2a" stroke="#111"/></svg>
                        <svg viewBox="0 0 16 16"><use href="#sq"/><path d="M2 10l6-2 6 1-5 4z" fill="#eee"/><path d="M6 4h4v4H6z" fill="#c02c2c"/><path d="M10 8h4v4h-4z" fill="#2c6dc0"/></svg>
                        <i></i>
                        <svg viewBox="0 0 16 16"><path d="M1 1h14v14H1z" fill="#d8287c" stroke="#7a1850"/><path d="M1.500 1.500h13v4h-13z" fill="#f08abf" stroke="none"/><path d="M2 9h11M9 7l3 2-3 2" stroke="#fff"/></svg>
                        <svg viewBox="0 0 16 16"><path d="M1 1h14v14H1z" fill="#4fd02c" stroke="#2a6e16"/><path d="M4 5h3v3H4zM9 3h4v4H9zM8 10h4v3H8z" fill="#c6f5a4" stroke="none"/><path d="M7 8h3v3H7zM2 11h3v3H2z" fill="#1c6e14" stroke="none"/></svg>
                        <svg class="cal" viewBox="0 0 16 16"><path d="M0 0h16v16H0z" fill="#222" stroke="none"/><text x="8" y="5.400" font-size="5.200">AUG</text><text x="8" y="14.500" font-size="10.500">20</text></svg>
                        <svg viewBox="0 0 16 16"><circle cx="8" cy="8" r="7" fill="#111"/><path d="M8 3v5l3-2M8 13v-1M3 8h1M12 8h1" stroke="#fff"/></svg>
                    </div>
                    <h6>Input<b>+</b></h6>
                </div>
                <div class="group g-util">
                    <div class="cells">
                        <svg viewBox="0 0 16 16"><path d="M5 9c0-4 2-6 6-8M11 9c1-3 0-6 0-8" stroke="#4a7d2a" stroke-width="1.400"/><path d="M5 1c3-1 6 0 6 1-2 2-5 2-6-1z" fill="#4aa02a"/><circle cx="5" cy="11" r="3.500" fill="#c8182a" stroke="#6b0a14"/><circle cx="12" cy="10.500" r="3.500" fill="#c8182a" stroke="#6b0a14"/></svg>
                        <svg viewBox="0 0 16 16"><use href="#sq"/><path d="M8 14V7M5 14h6M8 9l4-3M8 10L4 6M3 6c1-3 3-1 5-3 1 2 4 0 5 3M6 5l2 2 3-2" stroke="#111" stroke-width="1.500"/></svg>
                        <svg viewBox="0 0 16 16"><circle cx="8" cy="8.500" r="5.500" fill="#bbb" stroke="#222" stroke-width="2"/><path d="M11 4l4-2-1 4z" fill="#222"/></svg>
                        <svg viewBox="0 0 16 16"><path d="M1 13l4-7 1 6M3 10l3-1M7 11l2-7 2 1-3 3 2 2-3 1M15 3c-3 1-3 5-1 5" stroke="#222" stroke-width="1.300"/></svg>
                        <i></i>
                        <svg viewBox="0 0 16 16"><use href="#sq"/><path d="M4 5a5 5 0 108-1" stroke="#333" stroke-width="2"/></svg>
                        <svg viewBox="0 0 16 16"><rect x="1" y="1" width="14" height="14" fill="#ddd" stroke="#777"/><circle cx="8" cy="6" r="4" fill="#e8541c" stroke="#8a2a0a"/><circle cx="7" cy="5" r="1.500" fill="#fbc29c" stroke="none"/><path d="M3 10.500v4h2v-2H3M7 10.500v4h2M13 11h-2v3h2" stroke="#777"/></svg>
                        <svg viewBox="0 0 16 16"><path d="M2 12L12 1l3 3L5 15z" fill="#d9d2c1" stroke="#5f5848"/><path d="M5 10l1 1M7 8l1 1M9 6l1 1"/></svg>
                        <svg viewBox="0 0 16 16"><rect x="1" y="1" width="14" height="14" rx="1" fill="#5b78d0" stroke="#25387c"/><rect x="4" y="3" width="8.500" height="9" fill="#fff"/><path d="M6 5l2 2.500L10.500 5M8 7.500V11" stroke="#25387c"/></svg>
                        <i></i>
                        <svg viewBox="0 0 16 16"><path d="M2 6h6V3l6 5-6 5v-3H2z" fill="#444" stroke="#222"/></svg>
                        <svg viewBox="0 0 16 16"><path d="M2 6h6V3l6 5-6 5v-3H2z" fill="#fff" stroke="#555"/></svg>
                        <i></i>
                        <svg viewBox="0 0 16 16"><circle cx="6" cy="6" r="4" fill="url(#gBall)"/><circle cx="10" cy="10" r="4.500" fill="#d83474" stroke="#6a1234"/><circle cx="11" cy="4" r="2" fill="#eee"/></svg>
                        <svg viewBox="0 0 16 16"><path d="M6.500 1.500h3V7l4 7.500h-11l4-7.500z" fill="#fff"/><path d="M5.500 9h5l2.500 5H3z" fill="#d83474" stroke="#8a1848"/></svg>
                    </div>
                    <h6>Util<b>+</b></h6>
                </div>
                <div class="group g-nest">
                    <div class="cells">
                        <svg viewBox="0 0 16 16"><path d="M3 2l4 1 1 3 3-5 2 1-2 4 4 0-1 3-4-1 2 5-3 1-2-4-4 4-3-1 4-4-3-1z" fill="#111"/></svg>
                        <svg viewBox="0 0 16 16"><path d="M2 14C3 7 7 3 14 2M5 14c1-5 4-7 8-8M8 14c1-3 2-4 5-4"/></svg>
                        <i></i>
                        <svg viewBox="0 0 16 16"><path d="M2 4l11-2 1 3-4 1-2 9-3-1 2-8-4 1z"/></svg><b></b>
                        <i></i>
                        <svg viewBox="0 0 16 16"><path d="M3 3l9 5 2-1M2 8l9 5V9L4 5C2 4 1 6 2 8zM13 7l1 3-3 3"/></svg><b></b>
                        <i></i>
                        <svg viewBox="0 0 16 16"><path d="M5 4h10l-4 8H1z"/></svg>
                        <svg viewBox="0 0 16 16"><circle cx="4.500" cy="4.500" r="2.700"/><circle cx="11.500" cy="4.500" r="2.700"/><circle cx="4.500" cy="11.500" r="2.700"/><circle cx="11.500" cy="11.500" r="2.700"/></svg>
                        <svg viewBox="0 0 16 16"><path d="M2 6l5-4h7v6l-4 6H2zM2 6h8v8M10 6l4-4M4 9h3v3H4z"/></svg>
                        <svg viewBox="0 0 16 16"><path d="M1 6l5-4 8 3v7l-6 2-6-3zM6 6l4 3v5M3 8h3M8 4l6 5"/></svg>
                        <svg viewBox="0 0 16 16"><path d="M5 1l7 1 3 6-4 6-7-1-3-6zM6 5h5v6H5zM8 7v2"/></svg>
                        <svg viewBox="0 0 16 16"><path d="M1 5l5 3 4-5 1 4 4-3-1 8-7 3-5-3 3-2z"/></svg>
                        <i></i>
                        <svg viewBox="0 0 16 16"><path d="M5 2h10l-2 11H1zM3 8h11M7 4l-1 3M11 4v3"/></svg>
                        <svg viewBox="0 0 16 16"><path d="M1 8l8-6 5 3-4 3 3 6-5-5zM6 7l5 5"/></svg>
                    </div>
                    <h6>OpenNest<b>+</b></h6>
                </div>
            </div>

            <div class="gh-bar">
                <svg viewBox="0 0 16 16"><path d="M2 14V4l5-2h6v5" fill="#fff" stroke="#4c7a2c"/><path d="M1 14l2-7h12l-2 7z" fill="#5cb832" stroke="#2f6a18"/></svg>
                <svg viewBox="0 0 16 16"><path d="M1 1h13l1 2v12H1z" fill="#3566c4" stroke="#1b3678"/><rect x="4" y="1.500" width="8" height="5" fill="#ddd"/><rect x="4" y="9" width="9" height="6" fill="#fff"/><path d="M5 11h6" stroke="#888"/></svg>
                <i class="split"></i>
                <div class="zoom">138%<svg viewBox="0 0 8 8"><path d="M1.500 3L4 5.500 6.500 3"/></svg></div>
                <svg viewBox="0 0 16 16"><path d="M1 5V1h4M11 1h4v4M15 11v4h-4M5 15H1v-4" stroke="#111" stroke-width="2.400"/><path d="M6 6l4 4m0-4l-4 4" stroke="#111" stroke-width="1.800"/></svg>
                <i class="dd"></i>
                <svg viewBox="0 0 16 16"><path d="M.5 8c4-6 11-6 15 0-4 5-11 5-15 0z" fill="#fff" stroke="#246"/><circle cx="8" cy="7.500" r="3.500" fill="#3c8cc8" stroke="#135"/><circle cx="8" cy="7.500" r="1.500" fill="#111"/></svg>
                <i class="dd"></i>
                <svg viewBox="0 0 16 16"><path d="M1 7c3 1 0 5 2 6s2-2 5-3" stroke="#111"/><path d="M5 13l2-5 6-7c2 1 3 4 2 6l-7 5z" fill="#d23a2c" stroke="#6c1a12"/><path d="M8 10l5-7" stroke="#f3a89c" stroke-width="1.500"/></svg>
                <div class="modes">
                    <svg viewBox="0 0 16 16"><ellipse cx="8" cy="11.500" rx="5.500" ry="3" fill="#222"/><path d="M4 5l3-3 5 1v6l-4 1-4-2z" fill="#e4e4e4"/><path d="M4 5l4 1 4-3M8 6v4" stroke="#777"/></svg>
                    <svg viewBox="0 0 16 16"><path d="M2 8l6-6c3-1 7 3 6 6l-6 6c-3 1-7-3-6-6z" fill="#eee"/><path d="M4 6l6 6M7 3l6 6M2 9l9-5"/></svg>
                    <svg class="on" viewBox="0 0 16 16"><path d="M2 8l6-6c3-1 7 3 6 6l-6 6c-3 1-7-3-6-6z" fill="#c0141c" stroke="#600a0e"/><path d="M5 6l4-3" stroke="#f77" stroke-width="1.500"/></svg>
                    <i class="split"></i>
                    <svg viewBox="0 0 16 16"><path d="M2 3l5 1c4-2 8 0 7 5l-4 5c-5 1-6-2-5-5z" fill="#1b9c84" stroke="#0c4a3e"/><path d="M7 6l4 1" stroke="#9fe8d8" stroke-width="1.600"/></svg>
                    <svg viewBox="0 0 16 16"><path d="M2 8l6-6c3-1 7 3 6 6l-6 6c-3 1-7-3-6-6z" fill="#ddd" stroke="#555"/><path d="M5 5l3-3c3-1 7 3 6 6l-3 3z" fill="#5cb02a" stroke="#2a5a10"/></svg>
                    <svg viewBox="0 0 16 16"><circle cx="8" cy="8" r="6.500" fill="#d2762c" stroke="#555"/><path d="M8 1.500a6.500 6.500 0 010 13z" fill="#f2e6da"/></svg>
                    <i class="split thin"></i>
                    <svg viewBox="0 0 16 16"><circle cx="8" cy="8" r="6.500" fill="url(#gSky)" stroke="#235a94"/></svg>
                    <i class="dd"></i>
                </div>
            </div>

            <div class="canvas">
                <svg class="wires" viewBox="605 134 636 543">
                    <path class="net" d="M732.500 134V677M870.500 134V677M1009.500 134V677M1147.500 134V677M605 182.500H1241M605 228.500H1241M605 274.500H1241M605 320.500H1241M605 367.500H1241M605 412.500H1241M605 459.500H1241M605 505.500H1241M605 551.500H1241M605 597.500H1241M605 643.500H1241"/>
                    <path d="M902 263C1030 263 1130 256 1241 240"/>
                    <path class="from-pt" d="M794 325.500C900 325.500 1110 328 1241 331.500"/>
                    <path class="from-pt" d="M794 325.500C950 325.500 1090 358 1241 409.500"/>
                    <path class="from-pt" d="M794 325.500C980 325.500 1080 410 1241 459"/>
                    <path class="from-count" d="M914 443C1050 443 1140 466 1241 505"/>
                    <path class="from-count" d="M914 443C1040 443 1140 470 1241 516"/>
                    <path d="M900 515C1020 515 1130 509 1241 486"/>
                    <g class="grip">
                        <circle cx="900" cy="263" r="2.800"/><circle cx="743.500" cy="325.500" r="2.800"/><circle cx="792" cy="325.500" r="2.800"/>
                        <circle cx="900" cy="400.500" r="2.800"/><circle cx="900" cy="419" r="2.800"/><circle cx="911.500" cy="443" r="2.800"/>
                        <circle cx="898" cy="515" r="2.800"/><circle cx="904.500" cy="534.500" r="2.800"/><circle cx="904.500" cy="557.500" r="2.800"/>
                    </g>
                    <path class="hid" d="M895 397q-1.500 3.500 0 7M892.500 395.500q-2.500 5 0 10M890 394.500q-3 6 0 12M900 531q-1.500 3.500 0 7M897.500 529.500q-2.500 5 0 10M895 528.500q-3 6 0 12"/>
                </svg>

                <div class="node toggle"><span>Toggle</span><b>False</b></div>
                <div class="node pt">Pt</div>
                <div class="node slider ucount"><span>U Count</span><em><i class="rail"></i><i class="dia"></i>23<i class="rail two"></i></em></div>
                <div class="node slider bval"><span>B</span><em><i class="rail"></i>0.9759<i class="dot"></i></em></div>
                <div class="comp rays">
                    <svg viewBox="0 0 49 42"><path d="M2.500.5H43l4 3-3 3 3 3-3 3 3 3-3 3 3 3-3 3 3 3-3 3 3 3-3 3 3 4H2.500a2 2 0 01-2-2v-37a2 2 0 012-2z"/></svg>
                    <div class="pins"><span>G</span><span>M</span></div><b>Rays</b>
                </div>
                <div class="comp points">
                    <svg viewBox="0 0 49 51"><path d="M2.500.5H43l4 3-3 3 3 3-3 3 3 3-3 3 3 3-3 3 3 3-3 3 3 3-3 3 3 3-3 3 3 3-3 3 4 3H2.500a2 2 0 01-2-2v-46a2 2 0 012-2z"/></svg>
                    <div class="pins"><span>G</span><span>M</span></div><b>Points</b>
                </div>
                <i class="note n1"></i><i class="note n2"></i><i class="note n3"></i>

                <div class="widgets">
                    <svg class="on" viewBox="0 0 16 16"><path d="M1 4h14v4h-3c-1 0-1 6-2 6H7c-1 0-1-6-2-6H1z" fill="#e88a1c" stroke="#7a4208"/></svg>
                    <svg viewBox="0 0 16 16"><path d="M2 2l5 5-4 2M7 7l2-5M7 7l6 0 2-4M8 8l5 6M7 8l-3 6M10 7l4 3" stroke="#5c1a1a"/></svg>
                    <svg viewBox="0 0 16 16"><path d="M4 7l8 1-1 5-7-2z" fill="#e05a1c" stroke="#6a2408"/><path d="M6 7V2M12 8l2-5M4 11l-3 1M5 3l1-2 1 2"/></svg>
                </div>
                <svg class="compass" viewBox="0 0 36 36"><path d="M5.500 18A13.500 13.500 0 0110 9M24 7.500a13.500 13.500 0 017.500 11" stroke="#000" stroke-width="2.200" fill="none"/><path d="M6 3l4 1 1 3-4 0z" fill="#000"/><circle cx="18" cy="20" r="12.500" fill="#ddd" stroke="#333"/><circle cx="18" cy="20" r="11.300" fill="#dedede" stroke="#fff" stroke-width="1.200"/><path d="M10 12l3 1-2 2zM26 12l-3 1 2 2zM10 28l3-1-2-2zM26 28l-3-1 2-2z" fill="#fff"/></svg>
            </div>
            <div class="gh-status"><svg viewBox="0 0 16 16"><circle cx="8" cy="8" r="7" fill="url(#gBlue)" stroke="#123"/><path d="M8 4v2M8 7v5" stroke="#fff" stroke-width="2"/></svg><span>Autosave complete (210 seconds ago)</span><span class="ver">1.0.0007</span><svg class="size-grip" viewBox="0 0 8 8"><path d="M7 0v1.500M7 3v1.500M7 6v1.500M4 3v1.500M4 6v1.500M1 6v1.500" stroke="#999" stroke-width="1.500"/></svg></div>
        </div>

        <div class="taskbar">
            <div class="start"><svg viewBox="0 0 12 12"><path d="M0 1.700l5-.7v4.700H0zM5.700.9L12 0v5.700H5.700zM0 6.400h5v4.700l-5-.7zM5.700 6.400H12V12l-6.300-.9z" fill="#fff"/></svg></div>
            <div class="search">
                <svg viewBox="0 0 12 12"><circle cx="7.200" cy="4.700" r="3.800" stroke="#eee" fill="none"/><path d="M4.500 7.500L.8 11.300" stroke="#eee"/></svg>
                <span>Type here to search</span>
                <svg class="nuts" viewBox="0 0 40 24"><path d="M11 2c7-2 15 3 16 10l-8 6C15 13 12 8 11 2z" fill="#d9b27c" stroke="#8a6434" stroke-width=".6"/><path d="M15 5c5 1 8 5 8 9" stroke="#8fae2c" stroke-width="2" fill="none"/><ellipse cx="12" cy="16" rx="11" ry="6.500" fill="#e3bd88" stroke="#8a6434" stroke-width=".6"/><ellipse cx="12" cy="15" rx="8.500" ry="5" fill="#a5c92c"/><ellipse cx="11" cy="14" rx="4" ry="2" fill="#cfe66a"/><ellipse cx="33" cy="14" rx="6" ry="7.500" fill="#e0b47c" stroke="#8a6434" stroke-width=".6"/><path d="M36 8c1 5-1 10-4 12" stroke="#8fae2c" stroke-width="1.600" fill="none"/></svg>
            </div>
            <div class="apps">
                <span><svg viewBox="0 0 16 16"><path d="M5 1h5l2 4H8L6 11H1c-1-4 2-10 4-10z" fill="#2f9be8"/><path d="M11 15H6l-2-4h4l2-6h5c1 4-2 10-4 10z" fill="#e85c8c"/><path d="M1 11h5l2 3-3 1z" fill="#f2b32c"/><path d="M10 5h5l-2-3-3-1z" fill="#7a5ce8"/></svg></span>
                <span><svg viewBox="0 0 16 16"><rect width="16" height="16" rx="1" fill="#777"/><path d="M1 8h14v7H1z" fill="#eee"/><path d="M4 8v4M7 8v4M10 8v4M13 8v4" stroke="#111" stroke-width="1.500"/><path d="M1 3h14M2 5.500h12" stroke="#222" stroke-width="1.500" stroke-dasharray="2 1"/></svg></span>
                <span><svg viewBox="0 0 16 16"><path d="M1 3h14v11H1z" fill="#e9f3fb"/><path d="M3 5h6v7H3z" fill="#1e78d0"/><path d="M10 6h4M10 9h4" stroke="#789"/></svg></span>
                <span><svg viewBox="0 0 16 16"><rect width="16" height="16" fill="#555"/><path d="M0 1.500h16M0 14.500h16" stroke="#ddd" stroke-dasharray="1 1"/><path d="M8 3l1.600 3.500 3.900.3-3 2.400 1 3.800L8 11l-3.500 2 1-3.800-3-2.400 3.900-.3z" fill="#f5cf4a"/></svg></span>
                <span><svg viewBox="0 0 16 16"><circle cx="8" cy="8" r="7.300" fill="#2a2224" stroke="#8a7a7c" stroke-width=".7"/><path d="M3 7v2M5 5v6M7 5v6M9 4.500v7M11 6v4M13 7v2" stroke="#d8222c" stroke-width="1.700"/></svg></span>
                <span><b class="ps">Ps</b></span>
                <span><svg viewBox="0 0 16 16"><rect x="1" y="2" width="14" height="13" fill="#000"/><path d="M4 6l2.500 3V6M9.500 6v3L12 6M4 10.500h8M4 6v4M12 6v4" stroke="#16a878" fill="none" stroke-width=".8"/></svg></span>
                <span><svg viewBox="0 0 16 16"><path d="M7 0h9v13l-5 3z" fill="#cfe0e6"/><path d="M9 3l5 8" stroke="#345" stroke-width="2"/><rect y="3" width="10" height="10" fill="#1e78b8"/><path d="M7 5.500H3.500v5H7M3.500 8h3" stroke="#fff" fill="none" stroke-width="1.300"/></svg></span>
                <span><svg viewBox="0 0 16 16"><use href="#rhino"/></svg></span>
                <span><b class="rv">R</b></span>
                <span><svg viewBox="0 0 16 16"><path d="M1 1h14v9l-5 5H1z" fill="#f8d92c"/><path d="M10 15v-5h5z" fill="#5c5324"/></svg></span>
                <span><b class="au">Au</b></span>
                <span><b class="live">Live</b></span>
                <span><svg viewBox="0 0 16 16"><path d="M1 2h5l1 2h8v11H1z" fill="#e8b83c"/><path d="M1 5h14v10H1z" fill="#fbdf85"/><path d="M4 15V9h8v6h-2v-3H6v3z" fill="#4b93c8"/></svg></span>
                <span><b class="ac">A</b></span>
                <span><svg viewBox="0 0 16 16"><rect x="1" width="14" height="16" fill="#1c3c2c"/><path d="M4 2h8v2H4zM3 6h10v2H3zM7 6v8M4 14l1-5M12 14l-1-5M5 10h6" stroke="#7cc844" fill="#d8c83c"/></svg></span>
                <span class="run"><svg viewBox="0 0 16 16"><path d="M8 15.500C1 15.500-1 8 3 3l2 2 4-5c5 3 6 5 6.500 8 0 4-3 7.500-7.500 7.500z" fill="#f47a22"/><path d="M9 0c6 4 7 8 4 12 1-5-3-6-6-7z" fill="#fccc3c"/><circle cx="8" cy="9.500" r="3.500" fill="#7a3cc8"/><path d="M2 8c3 4 6 0 8 1-1 4-6 5-8-1z" fill="#f4502c"/></svg></span>
                <span class="run"><svg viewBox="0 0 16 16"><circle cx="7.500" cy="7.500" r="7" fill="#26262a" stroke="#aaa" stroke-width="1"/><path d="M7 2c-3 3 0 6 3 5M13 9c-4-1-5 2-3 4M3 10c3 2 6-1 4-3" stroke="#ccc" fill="none" stroke-width="1.300"/><circle cx="11.500" cy="11.500" r="4" fill="#e81c1c"/></svg></span>
                <span class="run cur"><svg viewBox="0 0 16 16"><use href="#rhino"/></svg></span>
            </div>
            <div class="weather">
                <svg viewBox="0 0 18 18"><path d="M2 8c-3-3 1-6 3-4 3-4 7 0 5 4z" fill="#7ea7e0"/><circle cx="12" cy="11" r="4.500" fill="#f7b23c"/><path d="M3 16c-3-3 1-6 4-4 3-2 6 2 3 4z" fill="#dfe6f0"/><circle cx="13" cy="5" r="4.800" fill="#c8202c"/><path d="M14.500 7.500V2.500L11.500 6H16" stroke="#fff" fill="none" stroke-width="1.200"/></svg>
                <span>29°C</span><span>Partly cloudy</span>
            </div>
            <div class="tray">
                <svg viewBox="0 0 12 12"><path d="M2 8l4-4 4 4"/></svg>
                <svg viewBox="0 0 12 12"><path d="M1 4h2l3-2.500v9L3 8H1zM8 4q1.500 2 0 4M9.500 2.500q3 3.500 0 7"/></svg>
                <svg viewBox="0 0 12 12"><path d="M1.500 11C1.500 5 5 2 11 1.500M4 11c0-4 3-6 7-6.500M6.500 11c0-2 2-4 4.500-4M9 11c0-1 1-1.500 2-1.500"/></svg>
                <svg viewBox="0 0 12 12"><path d="M4 4h8v6H4z"/><path d="M5 5h5v4H5z" fill="#fff"/><path d="M0 2h4v3c0 2-3 2-3 0V2M2 6v3"/></svg>
            </div>
            <span class="lang">ENG</span>
            <div class="clock">21:20<br>26-02-2026</div>
            <div class="notif"><svg viewBox="0 0 18 18"><path d="M1 2h12v10H7l-3 3v-3H1z" fill="#fff"/><path d="M3 5h8M3 7h8M3 9h5" stroke="#222"/><circle cx="12" cy="12" r="4.800" fill="#333" stroke="#777" stroke-width=".8"/></svg><b>1</b></div>
        </div>
    </div>

    <script src="grid.js"></script>
</body>
</html>
```

FILE: styles.css
```css
*{
    margin:0;
    padding:0;
    box-sizing:border-box;
}
body{
    width:1280px;
    height:720px;
    overflow:hidden;
    font:8px "Open Sans","Noto Sans",sans-serif;
    letter-spacing:-.12px;
    text-rendering:geometricPrecision;
    color:#333;
}
svg{
    display:block;
    flex:none;
}
i,em{
    font-style:normal;
}
.defs{
    position:absolute;
    width:0;
    height:0;
}
.desktop{
    position:relative;
    width:1280px;
    height:720px;
    display:flex;
    flex-direction:column;
    background:#e9ecee;
    overflow:hidden;
}

/* ---------- rhino ---------- */
.rhino{
    height:693px;
    background:#e9edf0;
    display:flex;
    flex-direction:column;
    white-space:nowrap;
}
.title-bar{
    height:15px;
    background:#fff;
    display:flex;
    align-items:center;
    padding:0 13px 0 2px;
    gap:4px;
    color:#888;
}
.title-bar svg{
    width:10px;
    height:10px;
}
.title-bar .close{
    width:7px;
    height:7px;
    margin-left:auto;
    stroke:#888;
}
.menu{
    height:14px;
    background:#fff;
    display:grid;
    grid-template-columns:21px 23px 26px 30px 35px 28px 27px 28px 48px 45px 27px 36px 34px 32px 30px;
    padding-left:5px;
    line-height:14px;
    color:#4a504c;
}
.history{
    height:26px;
    margin-left:3px;
    background:#fff;
    border-top:2px solid #e8ebed;
    border-bottom:1px solid #e8ebed;
    display:flex;
    justify-content:space-between;
}
.lines{
    height:23px;
    overflow:hidden;
    display:flex;
    flex-direction:column;
    justify-content:flex-end;
    padding-left:2px;
    color:#35503a;
}
.lines p{
    height:10px;
    flex:none;
    line-height:12px;
    letter-spacing:-.05px;
}
.scroll{
    width:12px;
    height:24px;
    stroke:#333;
    fill:none;
}
.command{
    height:13px;
    margin-left:3px;
    background:#fff;
    display:flex;
    justify-content:space-between;
    align-items:center;
    padding-left:2px;
    color:#222;
}
.command .scroll{
    height:13px;
    stroke:#aaa;
    stroke-width:.6;
}
.command .solid{
    fill:#222;
    stroke:none;
}
.tabs{
    height:12px;
    margin:4px 3px 0 2px;
    display:grid;
    grid-template-columns:46px 42px 43px 39px 36px 70px 44px 50px 53px 61px 51px 53px 30px 1fr;
    border-bottom:1px solid #cdd1d4;
    padding-left:3px;
    line-height:12px;
    color:#4a4f52;
}
.tabs span{
    padding-left:6px;
}
.tabs .on{
    height:12px;
    border:1px solid #cdd1d4;
    border-bottom:0;
    border-radius:3px 3px 0 0;
    background:#eef1f3;
    line-height:10px;
}
.tab-gear{
    width:10px;
    height:10px;
    justify-self:end;
    margin-right:2px;
}
.toolbar{
    display:grid;
    grid-auto-flow:column;
    grid-auto-columns:18.65px;
    justify-content:start;
    justify-items:center;
    align-items:center;
    padding-left:3px;
    margin-left:2px;
}
.toolbar svg,.side svg{
    width:14.500px;
    height:14.500px;
    fill:none;
    stroke:#555;
}
.row1{
    height:19px;
    margin-top:1px;
    margin-bottom:3px;
}
.row2{
    height:34px;
    padding:2px 0 11px 3px;
    border-top:1px solid #dde1e4;
    grid-template-columns:repeat(8,18.65px) 4px;
}
.split{
    width:1px;
    height:14px;
    background:#bbb;
}
.fly{
    background:linear-gradient(135deg,transparent 50%,#555 50%) right bottom/4px 4px no-repeat;
}
.main{
    height:516px;
    display:flex;
    flex:none;
}
.side{
    width:43px;
    padding:1px 6px 0 1px;
    display:grid;
    grid-template-columns:18px 18px;
    grid-auto-rows:18.7px;
    align-content:start;
    justify-items:center;
    align-items:center;
    border-top:1px solid #d6dadd;
    margin-top:3px;
}
.view{
    width:561px;
}
.view-port{
    position:relative;
    height:500px;
}
.scene{
    width:561px;
    height:500px;
    background:linear-gradient(#9ba3a9,#a0a8ae 25%,#98a1a8 60%,#9aa3aa);
}
.scene text{
    font-size:10px;
    fill:#4a5054;
}
.minor{
    stroke:#7b8288;
    stroke-width:.35;
    fill:none;
    opacity:.5;
}
.major{
    stroke:#686f75;
    stroke-width:.6;
    fill:none;
    opacity:.75;
}
.land{
    fill:url(#gLand);
}
.rim{
    fill:none;
    stroke:#2e7433;
    stroke-width:.9;
}
.iso{
    fill:none;
    stroke:#2c7a31;
    stroke-width:.6;
}
.block path{
    stroke:#e4e3df;
    stroke-width:.9;
}
.block .thin{
    fill:none;
    stroke-width:.6;
}
.edge{
    fill:none;
    stroke:#c00812;
    stroke-width:1.600;
}
.view-label{
    position:absolute;
    left:0;
    top:1px;
    width:61px;
    height:11px;
    background:#7f95e6;
    color:#14204e;
    line-height:11px;
    padding-left:5px;
    letter-spacing:.1px;
}
.view-label i{
    position:absolute;
    right:0;
    width:10px;
    height:11px;
    background:#8fa4ee;
}
.view-label i:after,.dd:after,.more:after{
    content:"";
    display:block;
    margin:4px auto 0;
    width:0;
    border:2.500px solid transparent;
    border-top-color:#222;
    border-bottom:0;
}
.view-tabs{
    height:16px;
    display:grid;
    grid-template-columns:50px 23px 29px 28px 10px;
    line-height:15px;
}
.view-tabs span{
    padding-left:5px;
}
.view-tabs .on{
    border:1px solid #ccc;
    border-top:0;
    border-radius:0 0 4px 4px;
    height:14px;
}
.view-tabs .plus{
    color:#777;
    letter-spacing:0;
}
.panel{
    width:37px;
    margin-left:639px;
    display:flex;
    flex-direction:column;
    height:516px;
    padding-top:7px;
}
.panel svg{
    width:11px;
    height:11px;
    fill:none;
}
.panel-tabs{
    height:20px;
    border-top:1px solid #d2d6da;
    border-bottom:1px solid #ccd0dc;
    display:flex;
    align-items:center;
    padding:6px 0 0 5px;
    gap:11px;
}
.pale{
    opacity:.5;
}
.panel-tools{
    height:22px;
    background:#dfe3f3;
    display:flex;
    align-items:center;
    gap:5px;
    padding-left:3px;
}
.list{
    height:452px;
    background:#fff;
    margin-right:2px;
}
.list div{
    height:12.650px;
    display:flex;
    border-bottom:1px solid #f0f0f0;
    line-height:12px;
    overflow:hidden;
}
.list .head{
    height:16px;
    line-height:14px;
    border-bottom-color:#ddd;
}
.list span{
    width:31px;
    flex:none;
    letter-spacing:-.15px;
}
.list em{
    color:#555;
}
.list .head em{
    border-left:1px solid #ccc;
    margin-left:-2px;
    padding-left:3px;
}
.hscroll{
    height:10px;
    background:#f0f0f0;
    margin-right:2px;
    padding:1px 0 0 25px;
    border-bottom:1px solid #ccd;
}
.hscroll svg{
    width:8px;
    height:8px;
}
.osnap{
    height:22px;
    display:grid;
    grid-template-columns:29px 32px 34px 29px 29px 25px 31px 28px 35px 32px 38px 45px 50px;
    padding:0 0 3px 6px;
    align-items:center;
    letter-spacing:0;
}
.osnap label{
    display:flex;
    align-items:center;
    gap:2px;
}
.osnap svg{
    width:9px;
    height:9px;
    border:1px solid #444;
    background:#fff;
}
.osnap .off svg{
    width:8px;
    height:8px;
    border-color:#bbb;
    background:#eee;
}
.osnap .off{
    color:#666;
    gap:3px;
}
.status{
    height:14px;
    border-top:1px solid #cfd3d6;
    background:#f2f4f6;
    display:grid;
    grid-template-columns:33px 58px 59px 59px 58px 112px 45px 29px 32px 32px 49px 37px;
    line-height:13px;
    text-align:center;
    letter-spacing:-.05px;
}
.status span{
    border-right:1px solid #d6d9dc;
}
.status .layer{
    display:flex;
    align-items:center;
    gap:2px;
    padding-left:3px;
}
.layer i{
    width:9px;
    height:9px;
    background:#000;
}
.status .act{
    background:#d9dcf0;
    font-weight:600;
    letter-spacing:-.15px;
}

/* ---------- grasshopper ---------- */
.gh{
    position:absolute;
    left:604px;
    top:0;
    width:639px;
    height:693px;
    border:1px solid #777;
    border-bottom:0;
    border-right-color:#aaa;
    background:#f2f2f2;
    box-shadow:0 0 9px rgba(0,0,0,.45);
    display:flex;
    flex-direction:column;
    white-space:nowrap;
}
.gh-title{
    height:19px;
    background:#fff;
    display:flex;
    justify-content:space-between;
    align-items:center;
    padding:0 10px 2px 5px;
    letter-spacing:-.05px;
}
.gh-title svg{
    width:70px;
    height:10px;
    stroke:#444;
    fill:none;
    stroke-width:.9;
}
.gh-menu{
    height:19px;
    display:grid;
    grid-template-columns:25px 26px 29px 38px 42px 30px 1fr;
    padding:0 5px 0 8px;
    line-height:20px;
    color:#35502f;
}
.gh-menu .doc{
    text-align:right;
    color:#333;
    letter-spacing:-.05px;
}
.gh-tabs{
    height:15px;
    display:grid;
    grid-template-columns:repeat(34,18.65px) 8px;
    background:#efefef;
    justify-items:center;
    align-items:center;
    font:900 11px/14px "Roboto","Liberation Sans",sans-serif;
    color:#333;
}
.gh-tabs svg{
    width:11px;
    height:11px;
    fill:none;
    stroke:#333;
}
.gh-tabs .on{
    width:18px;
    height:16px;
    padding:1px 3px;
    background:#fafafa;
    border:1px solid #ccc;
    border-bottom:0;
    border-radius:4px 4px 0 0;
}
.gh-tabs .pink{
    width:11px;
    height:11px;
    background:#e0287c;
    color:#fff;
    font-size:4.500px;
    line-height:11px;
    text-align:center;
}
.more{
    opacity:.6;
    margin:0 3px 4px 0;
}
.ribbon{
    height:58px;
    border-top:1px solid #aaa;
    padding:1px 0 0 1px;
    display:flex;
    align-items:flex-start;
    background:linear-gradient(#d8d8d8,#f0f0f0);
    border-bottom:1px solid #999;
}
.group{
    height:49px;
    margin-right:2px;
    border:1px solid #aaa;
    border-radius:3px;
    background:linear-gradient(#e4e4e4,#c8c8c8);
    overflow:hidden;
    flex:none;
}
.g-geo{
    width:147px;
}
.g-prim{
    width:41px;
}
.g-in{
    width:130px;
}
.g-util{
    width:135px;
}
.g-nest{
    width:160px;
}
.cells{
    height:38px;
    display:grid;
    grid-auto-flow:column;
    grid-template-rows:18.500px 18.500px;
    justify-content:center;
    justify-items:center;
    align-items:center;
    grid-auto-columns:auto;
}
.cells svg{
    width:16px;
    height:16px;
    margin:0 1.300px;
    fill:none;
    stroke:#333;
}
.cells i{
    grid-row:span 2;
    width:1px;
    height:30px;
    background:#b2b2b2;
    margin:0 2.900px;
}
.g-util .cells,.g-nest .cells{
    padding-right:2px;
}
.cells .w{
    stroke:#eee;
    stroke-width:1.200;
    fill:none;
}
.cells .w2{
    stroke:#fff;
    stroke-width:1.900;
}
.cells .f{
    fill:#ddd;
    stroke:#fff;
    stroke-width:.5;
}
.cells .cal text{
    fill:#fff;
    stroke:none;
    font-weight:bold;
    text-anchor:middle;
    letter-spacing:0;
}
.group h6{
    position:relative;
    height:9px;
    background:#151515;
    color:#eee;
    font-size:7px;
    line-height:8px;
    font-weight:600;
    text-align:center;
    padding-right:8px;
    letter-spacing:0;
}
.g-prim h6{
    letter-spacing:-.1px;
}
.group h6 b{
    position:absolute;
    right:1px;
    top:-1px;
    color:#888;
}
.gh-bar{
    height:22px;
    background:#fafafa;
    border-bottom:2px solid #c9c7bf;
    display:flex;
    align-items:center;
    padding:0 3px 0 2px;
    gap:5px;
}
.gh-bar svg{
    width:15px;
    height:15px;
    fill:none;
    stroke:#333;
}
.zoom{
    width:91px;
    height:15px;
    border:1px solid #999;
    background:#fff;
    display:flex;
    justify-content:space-between;
    align-items:center;
    padding:0 1px;
    font-size:7.500px;
    margin:0 -1px 0 -3px;
    color:#555;
}
.zoom svg{
    width:8px;
    height:8px;
    stroke:#555;
}
.gh-bar .dd{
    width:4px;
    margin:0 -1px 0 -1px;
}
.dd:after{
    border-width:2px;
    margin:0 auto;
}
.modes{
    margin-left:auto;
    display:flex;
    align-items:center;
    gap:3.600px;
}
.modes .on{
    width:19px;
    height:19px;
    margin:0 -2px;
    padding:1px;
    border:1px solid #4b8ac0;
    background:#e6f0f8;
}
.modes .split{
    margin:0 3px 0 4px;
}
.modes .thin{
    opacity:.4;
    margin:0 -1px;
}
.canvas{
    position:relative;
    height:543px;
    background:#d3d0c8;
    overflow:hidden;
    margin-right:1px;
}
.wires{
    width:636px;
    height:543px;
    fill:none;
    stroke:#57544e;
    stroke-width:2.400;
}
.wires .net{
    stroke:#c3c0b8;
    stroke-width:1;
}
.from-pt{
    stroke:url(#gPt);
}
.from-count{
    stroke:url(#gCount);
}
.grip circle{
    fill:#fff;
    stroke:#000;
    stroke-width:1.500;
}
.wires .hid{
    stroke:#a5a29a;
    stroke-width:.8;
}
.node{
    position:absolute;
    height:20px;
    border:1px solid #444;
    border-radius:2px;
    display:flex;
    font-size:10px;
    line-height:18px;
    letter-spacing:.1px;
    box-shadow:0 1px 2px rgba(0,0,0,.3);
    color:#222;
}
.toggle{
    left:197px;
    top:118px;
    width:97px;
    background:linear-gradient(#c6c5d0,#9b9aa8);
}
.toggle span{
    width:51px;
    text-align:center;
    letter-spacing:.4px;
}
.toggle b{
    width:43px;
    height:18px;
    border:1px solid #111;
    outline:1px solid #999;
    outline-offset:-2px;
    background:#3a3a3a;
    color:#fff;
    font:12px/15px "Liberation Mono","DejaVu Sans Mono",monospace;
    letter-spacing:.2px;
    text-align:center;
}
.pt{
    left:139px;
    top:182px;
    width:47px;
    height:19px;
    justify-content:center;
    border-color:#6e3c06;
    background:linear-gradient(#ffc173,#ff941c 45%,#f88a10);
    line-height:17px;
}
.slider span{
    background:linear-gradient(#bab9c6,#8f8e9c);
    border-right:1px solid #444;
    text-align:center;
    line-height:17px;
}
.slider em{
    flex:1;
    display:flex;
    align-items:center;
    background:linear-gradient(#f4f4f4,#cfcfcf);
}
.ucount{
    left:146px;
    top:299px;
    width:160px;
    height:19px;
}
.ucount span{
    width:49px;
}
.ucount em{
    padding:0 7px;
}
.rail{
    height:4px;
    flex:1;
    background:repeating-linear-gradient(90deg,#c6c6c6 0 1px,transparent 1px 8px);
    border-bottom:1px solid #d2d2d2;
}
.dia{
    width:6px;
    height:6px;
    border:1.500px solid #111;
    background:#fff;
    transform:rotate(45deg);
    margin:0 4px;
}
.ucount .rail{
    flex:none;
    width:25px;
}
.ucount .two{
    width:38px;
    margin-left:10px;
}
.bval{
    left:144px;
    top:371px;
    width:148px;
    height:19px;
}
.bval span{
    width:18px;
}
.bval em{
    padding:0 8px;
}
.bval .rail{
    margin-right:14px;
}
.dot{
    width:8px;
    height:8px;
    border:2px solid #111;
    border-radius:50%;
    background:#fff;
    margin-left:3px;
}
.comp{
    position:absolute;
    width:49px;
    display:flex;
    font-size:10px;
    color:#3a2205;
}
.comp svg{
    position:absolute;
    width:49px;
    height:100%;
    fill:#fb942a;
    stroke:#7a4206;
    overflow:visible;
}
.comp .pins{
    position:relative;
    width:20px;
    display:flex;
    flex-direction:column;
    justify-content:space-around;
    text-align:right;
    padding:1px 5px 0 0;
}
.comp b{
    position:relative;
    width:23px;
    margin:2px 0;
    border:1px solid #111;
    border-radius:2px;
    background:linear-gradient(90deg,#5a5a5a,#333);
    color:#fff;
    font-size:11px;
    line-height:21px;
    text-align:center;
    writing-mode:vertical-rl;
    transform:rotate(180deg);
    letter-spacing:0;
}
.rays{
    left:295px;
    top:255px;
    height:41px;
}
.points{
    left:300px;
    top:387px;
    height:50px;
}
.note{
    position:absolute;
    width:12px;
    height:9px;
    border:1px solid #8c6a10;
    border-radius:1px;
    background:linear-gradient(#fbe27c,#e8b01c);
}
.n1{
    left:173px;
    top:172px;
}
.n2{
    left:327px;
    top:245px;
}
.n3{
    left:331px;
    top:377px;
}
.widgets{
    position:absolute;
    left:0;
    bottom:0;
    width:61px;
    height:19px;
    border:1px solid #555;
    border-right-width:3px;
    background:linear-gradient(#ddd,#aaa);
    display:flex;
    align-items:center;
    gap:3px;
}
.widgets svg{
    width:16px;
    height:16px;
    padding:1px;
    fill:none;
    stroke:#222;
}
.widgets .on{
    border:1px solid #a86a1c;
    background:#fbd9a0;
}
.compass{
    position:absolute;
    left:599px;
    top:503px;
    width:36px;
    height:36px;
}
.gh-status{
    height:16px;
    background:#f1f1f1;
    border-top:1px solid #fff;
    display:flex;
    align-items:center;
    padding-left:2px;
    gap:3px;
    letter-spacing:-.02px;
}
.gh-status svg{
    width:10px;
    height:10px;
}
.gh-status .ver{
    margin-left:auto;
    color:#777;
}
.gh-status .size-grip{
    width:8px;
    height:8px;
    margin:5px 3px 0 6px;
}

/* ---------- taskbar ---------- */
.taskbar{
    position:relative;
    height:27px;
    background:#0e0e0f;
    display:flex;
    align-items:center;
    color:#fff;
    white-space:nowrap;
}
.start{
    width:32px;
    padding-left:10px;
}
.start svg{
    width:12px;
    height:12px;
}
.search{
    width:191px;
    height:26px;
    background:#3a3a3a;
    border:1px solid #4a4a4a;
    display:flex;
    align-items:center;
    padding:0 4px 0 7px;
    font-size:9.700px;
    letter-spacing:-.1px;
    gap:7px;
    color:#ddd;
}
.search svg{
    width:12px;
    height:12px;
}
.search .nuts{
    width:40px;
    height:24px;
    margin-left:auto;
}
.apps{
    display:grid;
    grid-template-columns:repeat(19,32.670px);
    height:27px;
    margin-left:2.500px;
}
.apps span{
    display:flex;
    align-items:center;
    justify-content:center;
}
.apps svg{
    width:16px;
    height:16px;
}
.apps b{
    width:14px;
    height:14px;
    text-align:center;
    line-height:12px;
    font-size:8px;
}
.apps .ps{
    background:#061e3a;
    border:1px solid #a9c9ff;
    color:#a9c9ff;
}
.apps .rv{
    width:16px;
    height:16px;
    background:#e6edf5;
    color:#2a68b0;
    font-size:13px;
    line-height:15px;
}
.apps .au{
    background:#04291f;
    border:1px solid #1cd29a;
    color:#1cd29a;
}
.apps .live{
    background:#666;
    color:#eee;
    font-size:6px;
    font-weight:normal;
    line-height:14px;
}
.apps .ac{
    width:16px;
    height:16px;
    background:#f5eaea;
    color:#b01620;
    font-size:14px;
    line-height:15px;
}
.apps .run{
    box-shadow:inset 0 -2px #4ab8a0;
    margin:0 2.500px;
}
.apps .cur{
    background:#3b3d3e;
    margin:0 0 0 1px;
}
.weather{
    display:flex;
    align-items:center;
    gap:5px;
    margin-left:151px;
    width:114px;
    font-size:9.500px;
    letter-spacing:-.15px;
}
.weather svg{
    width:17px;
    height:17px;
}
.tray{
    display:flex;
    gap:5px;
    width:71px;
}
.tray svg{
    width:11.500px;
    height:11.500px;
    stroke:#ddd;
    fill:none;
    stroke-width:.9;
}
.lang{
    width:19px;
    font-size:8.500px;
    letter-spacing:-.4px;
}
.clock{
    width:40px;
    text-align:center;
    font-size:8px;
    line-height:12.500px;
    letter-spacing:-.15px;
}
.notif{
    position:relative;
    margin-left:11px;
}
.notif svg{
    width:17px;
    height:17px;
}
.notif b{
    position:absolute;
    left:9.500px;
    top:6px;
    font-size:7.500px;
}
```

FILE: grid.js
```js
// ground plane of the perspective view: back corner and the two vanishing points
var corner = [533, 208];
var right = [2095, -60];
var left = [-836, -60];

function project(u, v){
    var w = 1 - u - v;
    var x = (corner[0] - u * right[0] - v * left[0]) / w;
    var y = (corner[1] - u * right[1] - v * left[1]) / w;
    return x.toFixed(1) + ' ' + y.toFixed(1);
}

function lines(step){
    var d = '';
    for(var t = 0; t <= 0.48; t += step){
        d += 'M' + project(t, 0) + 'L' + project(t, 0.45);
        d += 'M' + project(0, t) + 'L' + project(0.45, t);
    }
    return d;
}

document.getElementById('minor').setAttribute('d', lines(0.0034));
document.getElementById('major').setAttribute('d', lines(0.017));
```
